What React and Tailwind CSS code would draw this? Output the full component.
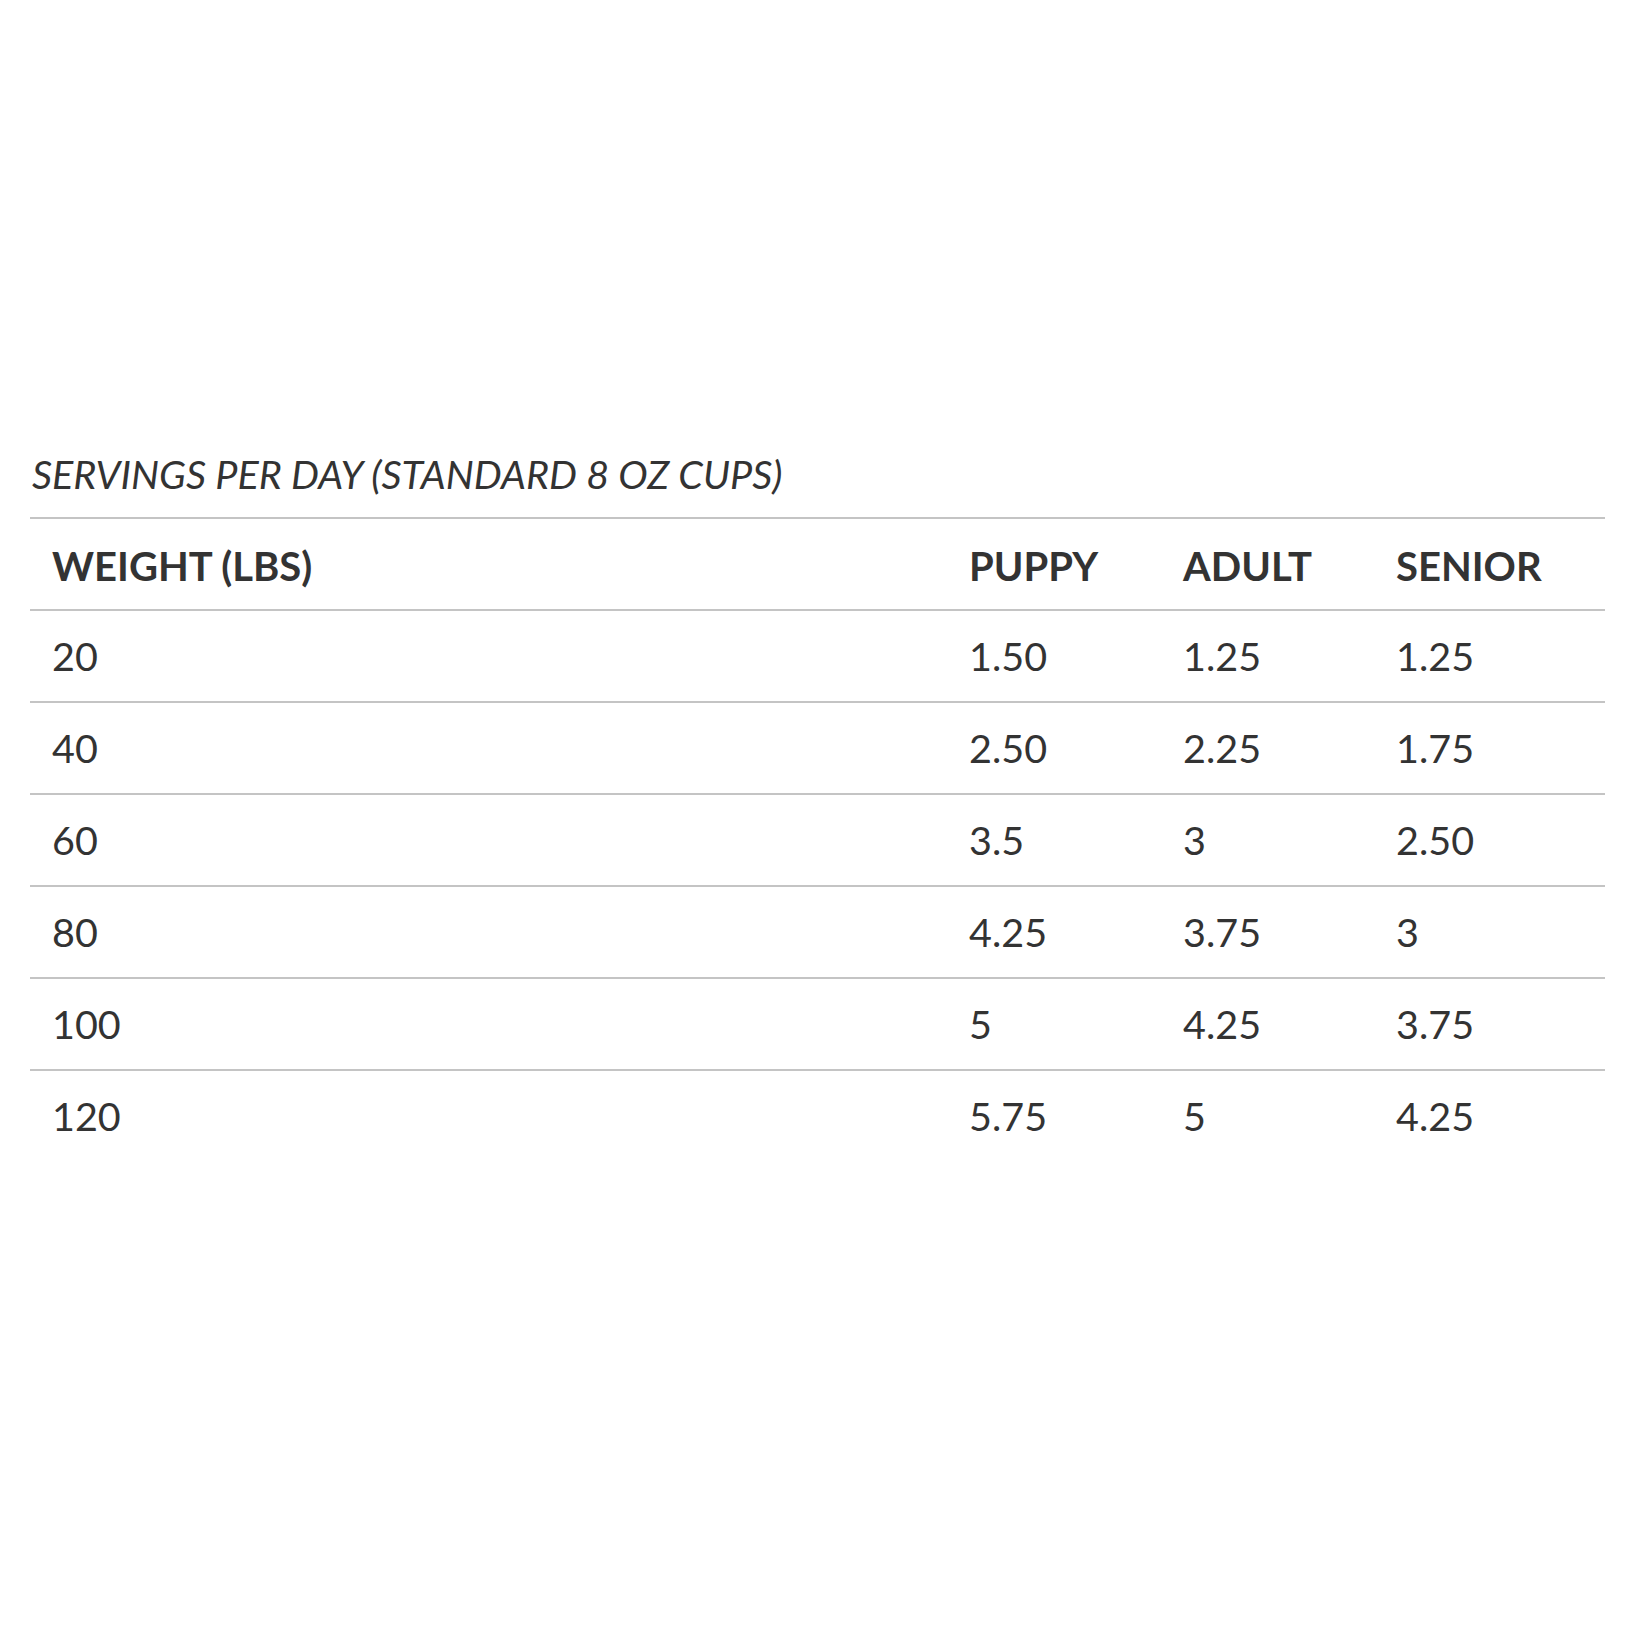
import React from 'react';

const rows = [
    ['20', '1.50', '1.25', '1.25'],
    ['40', '2.50', '2.25', '1.75'],
    ['60', '3.5', '3', '2.50'],
    ['80', '4.25', '3.75', '3'],
    ['100', '5', '4.25', '3.75'],
    ['120', '5.75', '5', '4.25'],
];

const cols = "grid grid-cols-[917px_214px_213px_1fr] items-center h-[92px]";

const App = () => {
    return (
        <div className="min-h-[1652px] bg-white text-[#333333] font-['Lato',_'Liberation_Sans',_sans-serif] pt-[447px] px-[30px]">
            <h2 className="italic text-[39.5px] leading-[54px] pl-[2px] pb-[16px]">
                SERVINGS PER DAY (STANDARD 8 OZ CUPS)
            </h2>
            <div className="w-[1575px]">
                <div className={`${cols} border-t-2 border-[#c4c4c4] font-bold text-[40px]`}>
                    <div className="pl-[22px] pt-[4px]">WEIGHT (LBS)</div>
                    <div className="pl-[22px] pt-[4px]">PUPPY</div>
                    <div className="pl-[22px] pt-[4px]">ADULT</div>
                    <div className="pl-[22px] pt-[4px]">SENIOR</div>
                </div>
                {rows.map((row) => (
                    <div key={row[0]} className={`${cols} border-t-2 border-[#c4c4c4] text-[39.5px]`}>
                        {row.map((cell, i) => (
                            <div key={i} className="pl-[22px]">{cell}</div>
                        ))}
                    </div>
                ))}
            </div>
        </div>
    );
};

export default App;
